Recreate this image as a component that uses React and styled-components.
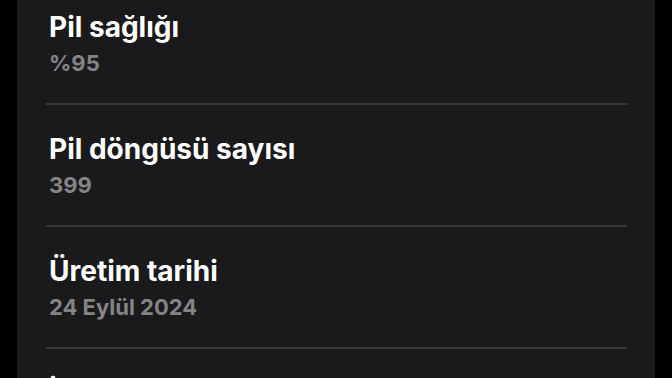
import React from "react";
import styled, { createGlobalStyle } from "styled-components";

const GlobalStyle = createGlobalStyle`
  html, body {
    margin: 0;
    padding: 0;
    background: #000;
    overflow: hidden;
  }
  body {
    font-family: Inter, "Noto Sans", sans-serif;
    -webkit-font-smoothing: antialiased;
  }
`;

const Screen = styled.div`
  height: 378px;
  padding: 0 17px;
  background: #000;
  overflow: hidden;
`;

const Panel = styled.div`
  height: 100%;
  background: #1a1a1c;
  padding: 0 28px 0 29px;
  overflow: hidden;
`;

/* list is scrolled: first row's top is above the viewport */
const List = styled.div`
  margin-top: -17px;
`;

const Row = styled.div`
  padding: 27px 0 27px 3px;
  border-bottom: 2px solid #38383b;
`;

const Title = styled.div`
  color: #fff;
  font-size: 28px;
  font-weight: 700;
  line-height: 34px;
`;

const Value = styled.div`
  color: #848487;
  font-size: 22px;
  font-weight: 700;
  line-height: 26px;
  margin-top: 6px;
`;

const items = [
  { title: "Pil sağlığı", value: "%95" },
  { title: "Pil döngüsü sayısı", value: "399" },
  { title: "Üretim tarihi", value: "24 Eylül 2024" },
  { title: "İlk kullanım", value: "5 Ekim 2024" },
];

export default function App() {
  return (
    <Screen>
      <GlobalStyle />
      <Panel>
        <List>
          {items.map((item) => (
            <Row key={item.title}>
              <Title>{item.title}</Title>
              <Value>{item.value}</Value>
            </Row>
          ))}
        </List>
      </Panel>
    </Screen>
  );
}
